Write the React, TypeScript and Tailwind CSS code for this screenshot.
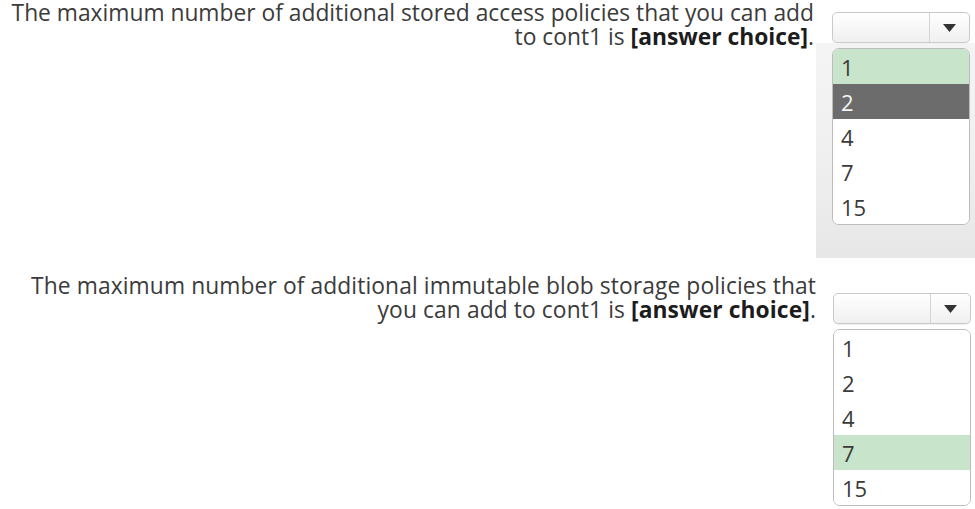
import React from "react";

type Row = { label: string; state?: "green" | "gray" };

function Select() {
  return (
    <div className="flex h-[31px] w-[138px] rounded-[5px] border border-[#c9c9c9] bg-gradient-to-b from-[#ffffff] to-[#f0f0f0] shadow-[0_1px_1px_rgba(0,0,0,0.06)]">
      <div className="flex-1" />
      <div className="flex w-[40px] items-center justify-center border-l border-[#d4d4d4]">
        <svg width="13" height="8" viewBox="0 0 13 8">
          <polygon points="0,0 13,0 6.5,8" fill="#333333" />
        </svg>
      </div>
    </div>
  );
}

function List({ rows }: { rows: Row[] }) {
  return (
    <div className="w-[138px] overflow-hidden rounded-[7px] border border-[#bcbcbc] bg-white">
      {rows.map((r) => (
        <div
          key={r.label}
          className={
            "flex h-[35px] items-center pl-[8px] text-[22px] leading-none " +
            (r.state === "green"
              ? "bg-[#c8e5cb] text-[#3a3a3a]"
              : r.state === "gray"
              ? "bg-[#6c6c6c] text-[#f4f4f4]"
              : "bg-white text-[#3a3a3a]")
          }
        >
          {r.label}
        </div>
      ))}
    </div>
  );
}

export default function App() {
  const font = { fontFamily: '"Open Sans", "Noto Sans", sans-serif' };
  return (
    <div className="h-[509px] w-[975px] overflow-hidden bg-white" style={font}>
      {/* Row 1 */}
      <div className="flex items-start">
        <div className="w-[816px] whitespace-nowrap pr-[2px] pt-[1px] text-right text-[22.8px] leading-[24px] text-[#3b3b3b]">
          <div>The maximum number of additional stored access policies that you can add</div>
          <div>
            to cont1 is <span className="font-bold text-[#1c1c1c]">[answer choice]</span>.
          </div>
        </div>
        <div className="flex w-[159px] flex-col">
          <div className="ml-[16px] mt-[12px]">
            <Select />
          </div>
          <div className="h-[215px] bg-gradient-to-b from-[#f4f4f4] via-[#f0f0f0] to-[#e7e7e7] pl-[16px] pt-[5px]">
            <List
              rows={[
                { label: "1", state: "green" },
                { label: "2", state: "gray" },
                { label: "4" },
                { label: "7" },
                { label: "15" },
              ]}
            />
          </div>
        </div>
      </div>

      {/* Row 2 */}
      <div className="mt-[15px] flex items-start">
        <div className="w-[816px] whitespace-nowrap pt-[1px] text-right text-[22.8px] leading-[24px] tracking-[0.1px] text-[#3b3b3b]">
          <div>The maximum number of additional immutable blob storage policies that</div>
          <div>
            you can add to cont1 is <span className="font-bold text-[#1c1c1c]">[answer choice]</span>.
          </div>
        </div>
        <div className="flex w-[159px] flex-col pl-[17px]">
          <div className="mt-[20px]">
            <Select />
          </div>
          <div className="mt-[5px]">
            <List
              rows={[
                { label: "1" },
                { label: "2" },
                { label: "4" },
                { label: "7", state: "green" },
                { label: "15" },
              ]}
            />
          </div>
        </div>
      </div>
    </div>
  );
}
